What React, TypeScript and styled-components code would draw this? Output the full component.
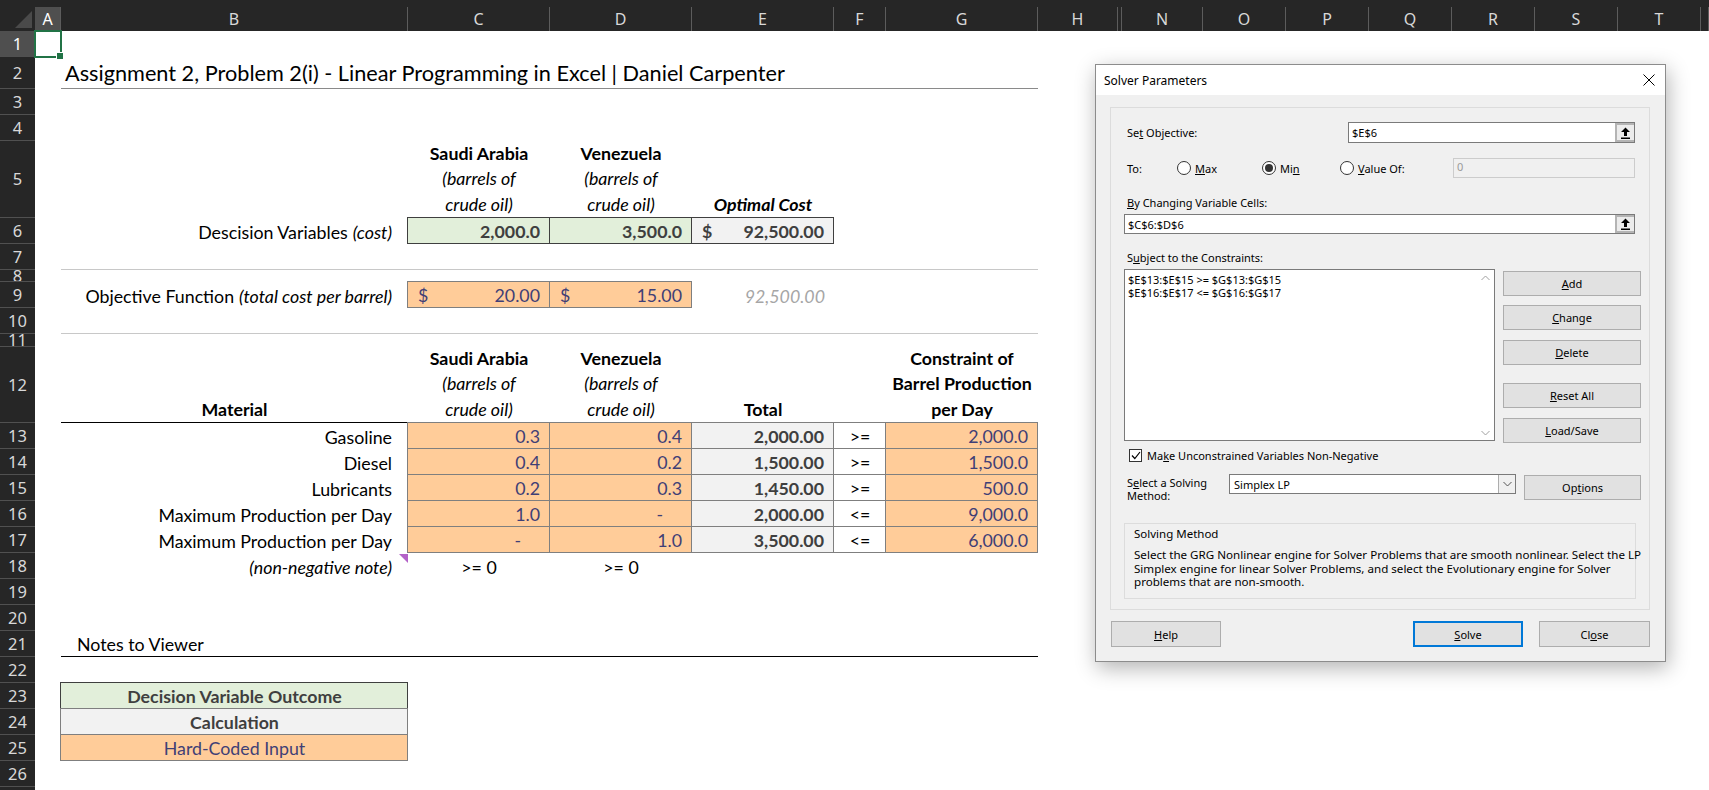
import React from 'react'
import styled, { createGlobalStyle } from 'styled-components'

const GlobalStyle = createGlobalStyle`
  html, body {
    margin: 0;
    padding: 0;
    background: #fff;
    overflow: hidden;
  }
`;

const SHEET_FONT = `Lato, "Open Sans", sans-serif`;
const UI_FONT = `"Noto Sans", "Open Sans", sans-serif`;

const Screen = styled.div`
  position: relative;
  width: 1709px;
  height: 790px;
  overflow: hidden;
  background: #fff;
`;

// ---- headers ----

const ColumnBar = styled.div`
  display: flex;
  align-items: flex-end;
  height: 31px;
  background: #262626;
  font-family: ${UI_FONT};
  font-size: 16px;
`;

const Corner = styled.div`
  width: 35px;
  height: 24px;
  flex-shrink: 0;
  display: flex;
  align-items: flex-end;
  justify-content: flex-end;
  padding: 0 3px 3px 0;
  box-sizing: border-box;
`;

const ColHead = styled.div<{ $w?: number; $active?: boolean }>`
  width: ${p => (p.$w ? `${p.$w}px` : 'auto')};
  flex: ${p => (p.$w ? '0 0 auto' : '1')};
  height: 24px;
  box-sizing: border-box;
  border-right: 1px solid #5c5c5c;
  background: ${p => (p.$active ? '#4f4f4f' : 'transparent')};
  color: ${p => (p.$active ? '#ffffff' : '#d8d8d8')};
  text-align: center;
  line-height: 24px;
`;

const Body = styled.div`
  display: flex;
`;

const RowHeads = styled.div`
  width: 35px;
  flex-shrink: 0;
  background: #262626;
  font-family: ${UI_FONT};
  font-size: 16.5px;
`;

const RowHead = styled.div<{ $h: number; $active?: boolean }>`
  height: ${p => p.$h}px;
  box-sizing: border-box;
  border-bottom: 1px solid #505050;
  background: ${p => (p.$active ? '#4f4f4f' : 'transparent')};
  color: ${p => (p.$active ? '#ffffff' : '#d8d8d8')};
  display: flex;
  align-items: center;
  justify-content: center;
  overflow: hidden;
  line-height: 20px;
`;

// ---- sheet ----

const Sheet = styled.div`
  flex: 1;
  display: grid;
  grid-template-columns: 26px 347px 142px 142px 142px 52px 152px 80px 1fr;
  grid-template-rows: 26px 32px 26px 26px 77px 26px 26px 12px 26px 26px 13px 76px repeat(15, 26px);
  font-family: ${SHEET_FONT};
  font-size: 17.8px;
  color: #000;
`;

const Cell = styled.div<{ $c: number; $r: number; $span?: number }>`
  grid-column: ${p => p.$c} / span ${p => p.$span ?? 1};
  grid-row: ${p => p.$r};
  display: flex;
  align-items: flex-end;
  min-width: 0;
  line-height: 24px;
  white-space: nowrap;
`;

const Selection = styled(Cell)`
  margin: -1px;
  border: 2px solid #217346;
  position: relative;

  &::after {
    content: '';
    position: absolute;
    right: -4px;
    bottom: -4px;
    width: 6px;
    height: 6px;
    background: #217346;
    border: 1px solid #fff;
  }
`;

const Title = styled(Cell)`
  font-size: 21.7px;
  padding-left: 4px;
  border-bottom: 1px solid #8a8a8a;
  line-height: 29px;
`;

const Rule = styled(Cell)<{ $color: string }>`
  border-bottom: 1px solid ${p => p.$color};
`;

const Label = styled(Cell)<{ $note?: boolean }>`
  justify-content: flex-end;
  padding-right: 16px;
  position: relative;

  &::after {
    content: '';
    display: ${p => (p.$note ? 'block' : 'none')};
    position: absolute;
    top: 1px;
    right: 0;
    border-top: 9px solid #b362c8;
    border-left: 9px solid transparent;
  }
`;

const Center = styled(Cell)<{ $bold?: boolean }>`
  justify-content: center;
  font-weight: ${p => (p.$bold ? 700 : 400)};
`;

const Heading = styled(Cell)`
  flex-direction: column;
  align-items: center;
  justify-content: flex-end;
  line-height: 25.5px;
  padding-bottom: 1px;
`;

const Line = styled.span<{ $bold?: boolean; $italic?: boolean }>`
  font-weight: ${p => (p.$bold ? 700 : 400)};
  font-style: ${p => (p.$italic ? 'italic' : 'normal')};
`;

const Em = styled.i`
  font-style: italic;
  margin-left: 5px;
`;

type Fill = 'output' | 'result' | 'calc' | 'input' | 'plain';

const fills: Record<Fill, { bg: string; border: string; color: string; weight: number }> = {
  output: { bg: '#E2EFDA', border: '#3F3F3F', color: '#3F3F3F', weight: 700 },
  result: { bg: '#F2F2F2', border: '#3F3F3F', color: '#3F3F3F', weight: 700 },
  calc: { bg: '#F2F2F2', border: '#7F7F7F', color: '#3F3F3F', weight: 700 },
  input: { bg: '#FFCC99', border: '#7F7F7F', color: '#3F3F76', weight: 400 },
  plain: { bg: '#FFFFFF', border: '#7F7F7F', color: '#000000', weight: 400 },
};

const Box = styled(Cell)<{ $fill: Fill; $align?: string; $padR?: number }>`
  margin: -1px 0 0 -1px;
  border: 1px solid ${p => fills[p.$fill].border};
  background: ${p => fills[p.$fill].bg};
  color: ${p => fills[p.$fill].color};
  font-weight: ${p => fills[p.$fill].weight};
  justify-content: ${p => p.$align ?? 'flex-end'};
  padding: 0 ${p => p.$padR ?? 9}px 0 10px;
`;

const Ghost = styled(Cell)`
  justify-content: flex-end;
  padding-right: 9px;
  font-style: italic;
  color: #a6a6a6;
`;

const Notes = styled(Cell)`
  padding-left: 16px;
  border-bottom: 1px solid #000;
`;

// ---- solver dialog ----

const Dialog = styled.div`
  position: absolute;
  left: 1095px;
  top: 64px;
  width: 571px;
  height: 598px;
  box-sizing: border-box;
  border: 1px solid #8c8c8c;
  background: #f0f0f0;
  box-shadow: 2px 6px 20px rgba(0, 0, 0, 0.3);
  font-family: ${UI_FONT};
  font-size: 11px;
  color: #000;
  display: flex;
  flex-direction: column;
`;

const TitleBar = styled.div`
  height: 30px;
  flex-shrink: 0;
  background: #fff;
  display: flex;
  align-items: center;
  justify-content: space-between;
  padding: 0 10px 0 8px;
  font-size: 12px;
`;

const DialogBody = styled.div`
  flex: 1;
  padding: 12px 15px 0 14px;
  display: flex;
  flex-direction: column;
`;

const GroupBox = styled.div`
  height: 503px;
  box-sizing: border-box;
  border: 1px solid #dcdcdc;
  padding: 14px 13px 0 13px;
  display: flex;
  flex-direction: column;
`;

const FormRow = styled.div<{ $mt?: number; $h?: number }>`
  display: flex;
  align-items: center;
  margin-top: ${p => p.$mt ?? 0}px;
  height: ${p => (p.$h ? `${p.$h}px` : 'auto')};
`;

const FieldLabel = styled.div<{ $w?: number }>`
  width: ${p => (p.$w ? `${p.$w}px` : 'auto')};
  flex-shrink: 0;
  padding-left: 3px;
  box-sizing: border-box;
  line-height: 15px;
`;

const U = styled.span`
  text-decoration: underline;
  text-underline-offset: 1px;
`;

const TextBox = styled.div<{ $w: number; $disabled?: boolean }>`
  width: ${p => p.$w}px;
  flex-shrink: 0;
  height: 100%;
  box-sizing: border-box;
  border: 1px solid ${p => (p.$disabled ? '#cccccc' : '#7a7a7a')};
  background: ${p => (p.$disabled ? '#f0f0f0' : '#ffffff')};
  color: ${p => (p.$disabled ? '#9a9a9a' : '#000')};
  display: flex;
  align-items: ${p => (p.$disabled ? 'flex-start' : 'center')};
  justify-content: space-between;
  padding-left: 3px;
  line-height: 15px;
`;

const RefButton = styled.div`
  width: 19px;
  height: 100%;
  box-sizing: border-box;
  border: 2px solid #b4b4b4;
  border-right: 0;
  background: #ececec;
  display: flex;
  align-items: center;
  justify-content: center;
`;

const RadioOption = styled.div<{ $w: number }>`
  width: ${p => p.$w}px;
  display: flex;
  align-items: center;
  gap: 4px;
  flex-shrink: 0;
`;

const Radio = styled.span<{ $on?: boolean }>`
  width: 14px;
  height: 14px;
  box-sizing: border-box;
  border: 1px solid #333;
  border-radius: 50%;
  background: #fff;
  display: inline-flex;
  align-items: center;
  justify-content: center;

  &::after {
    content: '';
    display: ${p => (p.$on ? 'block' : 'none')};
    width: 8px;
    height: 8px;
    border-radius: 50%;
    background: #333;
  }
`;

const Constraints = styled.div`
  display: flex;
  align-items: flex-start;
  margin-top: 4px;
`;

const ListBox = styled.div`
  width: 371px;
  height: 172px;
  flex-shrink: 0;
  box-sizing: border-box;
  border: 1px solid #7a7a7a;
  background: #fff;
  display: flex;
`;

const ListItems = styled.div`
  flex: 1;
  padding: 3px 0 0 3px;
  line-height: 13px;
`;

const ScrollTrack = styled.div`
  width: 17px;
  display: flex;
  flex-direction: column;
  justify-content: space-between;
  align-items: center;
  padding: 5px 0 4px;
`;

const ButtonColumn = styled.div`
  margin: 2px 0 0 8px;
  flex-shrink: 0;
  display: flex;
  flex-direction: column;
`;

const Button = styled.div<{ $w: number; $h?: number; $mt?: number; $ml?: number; $primary?: boolean }>`
  width: ${p => p.$w}px;
  height: ${p => p.$h ?? 25}px;
  margin-top: ${p => p.$mt ?? 0}px;
  margin-left: ${p => p.$ml ?? 0}px;
  box-sizing: border-box;
  border: ${p => (p.$primary ? '2px solid #0078d7' : '1px solid #adadad')};
  background: #e1e1e1;
  display: flex;
  align-items: center;
  justify-content: center;
  flex-shrink: 0;
`;

const CheckBox = styled.span`
  width: 13px;
  height: 13px;
  flex-shrink: 0;
  box-sizing: border-box;
  border: 1px solid #333;
  background: #fff;
  display: inline-flex;
  align-items: center;
  justify-content: center;
  margin: 0 5px 0 5px;
`;

const MethodLabel = styled.div`
  width: 105px;
  flex-shrink: 0;
  padding: 2px 0 0 3px;
  box-sizing: border-box;
  line-height: 13px;
  align-self: flex-start;
`;

const Select = styled.div`
  width: 287px;
  height: 20px;
  flex-shrink: 0;
  box-sizing: border-box;
  border: 1px solid #7a7a7a;
  background: #fff;
  display: flex;
  align-items: center;
  justify-content: space-between;
  padding-left: 4px;
  align-self: flex-start;
`;

const SelectArrow = styled.div`
  width: 17px;
  height: 100%;
  box-sizing: border-box;
  border-left: 1px solid #adadad;
  background: #f0f0f0;
  display: flex;
  align-items: center;
  justify-content: center;
`;

const InfoBox = styled.div`
  margin-top: 23px;
  height: 76px;
  box-sizing: border-box;
  border: 1px solid #dcdcdc;
  padding: 2px 9px 0 9px;
`;

const InfoTitle = styled.div`
  line-height: 15px;
  font-size: 11.5px;
`;

const InfoText = styled.div`
  margin-top: 7px;
  line-height: 13.5px;
  font-size: 11.6px;
  white-space: nowrap;
`;

const Footer = styled.div`
  display: flex;
  margin-top: 11px;
  padding-left: 1px;
`;

const FooterSpacer = styled.div`
  flex: 1;
`;

// ---- data ----

const columns = [
  { l: 'A', w: 26, active: true },
  { l: 'B', w: 347 },
  { l: 'C', w: 142 },
  { l: 'D', w: 142 },
  { l: 'E', w: 142 },
  { l: 'F', w: 52 },
  { l: 'G', w: 152 },
  { l: 'H', w: 80 },
  { l: '', w: 4 },
  { l: 'N', w: 81 },
  { l: 'O', w: 83 },
  { l: 'P', w: 83 },
  { l: 'Q', w: 83 },
  { l: 'R', w: 83 },
  { l: 'S', w: 83 },
  { l: 'T', w: 83 },
];

const rowHeights = [26, 32, 26, 26, 77, 26, 26, 12, 26, 26, 13, 76, ...Array(15).fill(26)];

const materials = [
  { name: 'Gasoline', sa: '0.3', ve: '0.4', total: '2,000.00', op: '>=', limit: '2,000.0' },
  { name: 'Diesel', sa: '0.4', ve: '0.2', total: '1,500.00', op: '>=', limit: '1,500.0' },
  { name: 'Lubricants', sa: '0.2', ve: '0.3', total: '1,450.00', op: '>=', limit: '500.0' },
  { name: 'Maximum Production per Day', sa: '1.0', ve: '-', total: '2,000.00', op: '<=', limit: '9,000.0' },
  { name: 'Maximum Production per Day', sa: '-', ve: '1.0', total: '3,500.00', op: '<=', limit: '6,000.0' },
];

function RefArrow() {
  return (
    <svg width="11" height="12" viewBox="0 0 11 12">
      <path d="M5.5 0.5 L10 5 H7 V9 H4 V5 H1 Z" fill="#000" />
      <rect x="1" y="10.5" width="9" height="1.5" fill="#000" />
    </svg>
  );
}

function Chevron({ up, color = '#a0a0a0' }: { up?: boolean; color?: string }) {
  return (
    <svg width="9" height="6" viewBox="0 0 9 6">
      <path d={up ? 'M0.5 5 L4.5 1 L8.5 5' : 'M0.5 1 L4.5 5 L8.5 1'} fill="none" stroke={color} strokeWidth="1" />
    </svg>
  );
}

function SolverDialog() {
  return (
    <Dialog>
      <TitleBar>
        <span>Solver Parameters</span>
        <svg width="12" height="12" viewBox="0 0 12 12">
          <path d="M0.5 0.5 L11.5 11.5 M11.5 0.5 L0.5 11.5" stroke="#000" strokeWidth="1" />
        </svg>
      </TitleBar>
      <DialogBody>
        <GroupBox>
          <FormRow $h={21}>
            <FieldLabel $w={224}>Se<U>t</U> Objective:</FieldLabel>
            <TextBox $w={287}>
              $E$6
              <RefButton><RefArrow /></RefButton>
            </TextBox>
          </FormRow>

          <FormRow $mt={15} $h={20}>
            <FieldLabel $w={53}>To:</FieldLabel>
            <RadioOption $w={85}><Radio /><span><U>M</U>ax</span></RadioOption>
            <RadioOption $w={78}><Radio $on /><span>Mi<U>n</U></span></RadioOption>
            <RadioOption $w={113}><Radio /><span><U>V</U>alue Of:</span></RadioOption>
            <TextBox $w={182} $disabled>0</TextBox>
          </FormRow>

          <FormRow $mt={17}>
            <FieldLabel><U>B</U>y Changing Variable Cells:</FieldLabel>
          </FormRow>
          <FormRow $mt={4} $h={20}>
            <TextBox $w={511}>
              $C$6:$D$6
              <RefButton><RefArrow /></RefButton>
            </TextBox>
          </FormRow>

          <FormRow $mt={16}>
            <FieldLabel>S<U>u</U>bject to the Constraints:</FieldLabel>
          </FormRow>
          <Constraints>
            <ListBox>
              <ListItems>
                <div>$E$13:$E$15 &gt;= $G$13:$G$15</div>
                <div>$E$16:$E$17 &lt;= $G$16:$G$17</div>
              </ListItems>
              <ScrollTrack>
                <Chevron up />
                <Chevron />
              </ScrollTrack>
            </ListBox>
            <ButtonColumn>
              <Button $w={138}><span><U>A</U>dd</span></Button>
              <Button $w={138} $mt={9}><span><U>C</U>hange</span></Button>
              <Button $w={138} $mt={10}><span><U>D</U>elete</span></Button>
              <Button $w={138} $mt={18}><span><U>R</U>eset All</span></Button>
              <Button $w={138} $mt={10}><span><U>L</U>oad/Save</span></Button>
            </ButtonColumn>
          </Constraints>

          <FormRow $mt={6} $h={13}>
            <CheckBox>
              <svg width="10" height="9" viewBox="0 0 10 9">
                <path d="M1 4.5 L3.8 7.5 L9 1" fill="none" stroke="#000" strokeWidth="1.2" />
              </svg>
            </CheckBox>
            <span>Ma<U>k</U>e Unconstrained Variables Non-Negative</span>
          </FormRow>

          <FormRow $mt={12} $h={26}>
            <MethodLabel>S<U>e</U>lect a Solving<br />Method:</MethodLabel>
            <Select>
              Simplex LP
              <SelectArrow><Chevron color="#555" /></SelectArrow>
            </Select>
            <Button $w={117} $ml={8}><span>Op<U>t</U>ions</span></Button>
          </FormRow>

          <InfoBox>
            <InfoTitle>Solving Method</InfoTitle>
            <InfoText>
              Select the GRG Nonlinear engine for Solver Problems that are smooth nonlinear. Select the LP<br />
              Simplex engine for linear Solver Problems, and select the Evolutionary engine for Solver<br />
              problems that are non-smooth.
            </InfoText>
          </InfoBox>
        </GroupBox>

        <Footer>
          <Button $w={110} $h={26}><span><U>H</U>elp</span></Button>
          <FooterSpacer />
          <Button $w={110} $h={26} $primary><span><U>S</U>olve</span></Button>
          <Button $w={111} $h={26} $ml={16}><span>Cl<U>o</U>se</span></Button>
        </Footer>
      </DialogBody>
    </Dialog>
  );
}

export default function App() {
  return (
    <Screen>
      <GlobalStyle />
      <ColumnBar>
        <Corner>
          <svg width="17" height="17" viewBox="0 0 17 17">
            <path d="M17 0 L17 17 L0 17 Z" fill="#4a4a4a" />
          </svg>
        </Corner>
        {columns.map((c, i) => (
          <ColHead key={i} $w={c.w} $active={c.active}>{c.l}</ColHead>
        ))}
        <ColHead />
      </ColumnBar>

      <Body>
        <RowHeads>
          {rowHeights.map((h, i) => (
            <RowHead key={i} $h={h} $active={i === 0}>{i + 1}</RowHead>
          ))}
        </RowHeads>

        <Sheet>
          <Selection $c={1} $r={1} />

          <Title $c={2} $r={2} $span={6}>
            Assignment 2, Problem 2(i) - Linear Programming in Excel | Daniel Carpenter
          </Title>

          {/* decision variables */}
          <Heading $c={3} $r={5}>
            <Line $bold>Saudi Arabia</Line>
            <Line $italic>(barrels of</Line>
            <Line $italic>crude oil)</Line>
          </Heading>
          <Heading $c={4} $r={5}>
            <Line $bold>Venezuela</Line>
            <Line $italic>(barrels of</Line>
            <Line $italic>crude oil)</Line>
          </Heading>
          <Heading $c={5} $r={5}>
            <Line $bold $italic>Optimal Cost</Line>
          </Heading>

          <Label $c={2} $r={6}>Descision Variables<Em>(cost)</Em></Label>
          <Box $c={3} $r={6} $fill="output">2,000.0</Box>
          <Box $c={4} $r={6} $fill="output">3,500.0</Box>
          <Box $c={5} $r={6} $fill="result" $align="space-between">
            <span>$</span><span>92,500.00</span>
          </Box>

          <Rule $c={2} $r={7} $span={6} $color="#c8c8c8" />

          <Label $c={2} $r={9}>Objective Function<Em>(total cost per barrel)</Em></Label>
          <Box $c={3} $r={9} $fill="input" $align="space-between">
            <span>$</span><span>20.00</span>
          </Box>
          <Box $c={4} $r={9} $fill="input" $align="space-between">
            <span>$</span><span>15.00</span>
          </Box>
          <Ghost $c={5} $r={9}>92,500.00</Ghost>

          <Rule $c={2} $r={10} $span={6} $color="#c8c8c8" />

          {/* constraints */}
          <Rule $c={2} $r={12} $span={6} $color="#000" />
          <Heading $c={2} $r={12}>
            <Line $bold>Material</Line>
          </Heading>
          <Heading $c={3} $r={12}>
            <Line $bold>Saudi Arabia</Line>
            <Line $italic>(barrels of</Line>
            <Line $italic>crude oil)</Line>
          </Heading>
          <Heading $c={4} $r={12}>
            <Line $bold>Venezuela</Line>
            <Line $italic>(barrels of</Line>
            <Line $italic>crude oil)</Line>
          </Heading>
          <Heading $c={5} $r={12}>
            <Line $bold>Total</Line>
          </Heading>
          <Heading $c={7} $r={12}>
            <Line $bold>Constraint of</Line>
            <Line $bold>Barrel Production</Line>
            <Line $bold>per Day</Line>
          </Heading>

          {materials.map((m, i) => (
            <React.Fragment key={i}>
              <Label $c={2} $r={13 + i}>{m.name}</Label>
              <Box $c={3} $r={13 + i} $fill="input" $padR={m.sa === '-' ? 28 : 9}>{m.sa}</Box>
              <Box $c={4} $r={13 + i} $fill="input" $padR={m.ve === '-' ? 28 : 9}>{m.ve}</Box>
              <Box $c={5} $r={13 + i} $fill="calc">{m.total}</Box>
              <Box $c={6} $r={13 + i} $fill="plain" $align="center">{m.op}</Box>
              <Box $c={7} $r={13 + i} $fill="input">{m.limit}</Box>
            </React.Fragment>
          ))}

          <Label $c={2} $r={18} $note><Em>(non-negative note)</Em></Label>
          <Center $c={3} $r={18}>&gt;= 0</Center>
          <Center $c={4} $r={18}>&gt;= 0</Center>

          {/* legend */}
          <Notes $c={2} $r={21} $span={6}>Notes to Viewer</Notes>
          <Box $c={2} $r={23} $fill="output" $align="center">Decision Variable Outcome</Box>
          <Box $c={2} $r={24} $fill="calc" $align="center">Calculation</Box>
          <Box $c={2} $r={25} $fill="input" $align="center">Hard-Coded Input</Box>
        </Sheet>
      </Body>

      <SolverDialog />
    </Screen>
  );
}
